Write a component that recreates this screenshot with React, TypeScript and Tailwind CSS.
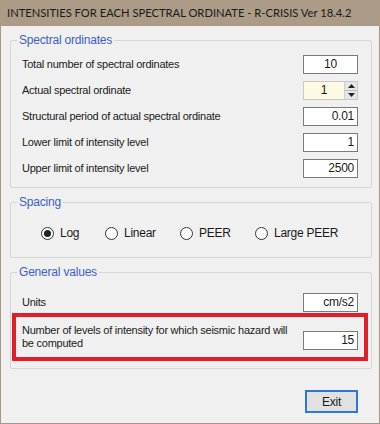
import type { ReactNode } from "react";

const body = "font-['Liberation_Sans',Arial,sans-serif] text-[11px] tracking-[-0.25px] text-[#1a1a1a]";

function Group({ title, children, className = "" }: { title: string; children: ReactNode; className?: string }) {
	return (
		<fieldset className={`border border-[#d5d5d5] rounded-[2px] ${className}`}>
			<legend className="ml-[6px] px-[2px] font-['Liberation_Sans',Arial,sans-serif] text-[12px] tracking-[-0.2px] leading-[15px] text-[#3d5fc4]">
				{title}
			</legend>
			{children}
		</fieldset>
	);
}

function Box({ value, align = "right" }: { value: string; align?: "right" | "center" }) {
	return (
		<div
			className={`w-[55px] h-[19px] bg-white border border-[#7a7a7a] flex items-center px-[3px] ${
				align === "center" ? "justify-center" : "justify-end"
			} ${body} text-[12px]`}
		>
			{value}
		</div>
	);
}

function Row({ label, children }: { label: string; children: ReactNode }) {
	return (
		<div className="h-[26px] flex items-center justify-between pl-[11px] pr-[13px]">
			<span className={body}>{label}</span>
			{children}
		</div>
	);
}

function Radio({ label, checked = false, width }: { label: string; checked?: boolean; width: string }) {
	return (
		<div className={`flex items-center gap-[6px] ${width}`}>
			<span className="w-[13px] h-[13px] rounded-full border border-[#333] bg-white flex items-center justify-center">
				{checked && <span className="w-[7px] h-[7px] rounded-full bg-[#222]" />}
			</span>
			<span className={`${body} text-[12px]`}>{label}</span>
		</div>
	);
}

export default function App() {
	return (
		<div className="w-[380px] h-[424px] bg-[#f0f0f0] border-x border-b border-[#a89682] flex flex-col">
			<div className="h-[26px] -mx-px bg-[#ab9b87] flex items-center px-[7px] whitespace-nowrap overflow-hidden font-['Lato',sans-serif] text-[11.2px] text-[#1a1a1a]">
				INTENSITIES FOR EACH SPECTRAL ORDINATE - R-CRISIS Ver 18.4.2
			</div>

			<div className="flex flex-col pl-[9px] pr-[7px] pt-[7px]">
				<Group title="Spectral ordinates" className="pt-[3px] pb-[6px]">
					<Row label="Total number of spectral ordinates">
						<Box value="10" align="center" />
					</Row>
					<Row label="Actual spectral ordinate">
						<div className="w-[55px] h-[19px] bg-[#fdfae3] border border-[#c8c8c8] flex items-stretch">
							<div className={`flex-1 flex items-center justify-center ${body} text-[12px]`}>1</div>
							<div className="w-[13px] flex flex-col border-l border-[#d0d0d0]">
								<div className="flex-1 bg-[#e6e6e6] border-b border-[#bdbdbd] flex items-center justify-center">
									<svg width="7" height="4" viewBox="0 0 7 4"><path d="M3.5 0 L7 4 L0 4 Z" fill="#222" /></svg>
								</div>
								<div className="flex-1 bg-[#e6e6e6] flex items-center justify-center">
									<svg width="7" height="4" viewBox="0 0 7 4"><path d="M0 0 L7 0 L3.5 4 Z" fill="#222" /></svg>
								</div>
							</div>
						</div>
					</Row>
					<Row label="Structural period of actual spectral ordinate">
						<Box value="0.01" />
					</Row>
					<Row label="Lower limit of intensity level">
						<Box value="1" />
					</Row>
					<Row label="Upper limit of intensity level">
						<Box value="2500" />
					</Row>
				</Group>

				<Group title="Spacing" className="mt-[7px] h-[63px]">
					<div className="flex items-center pl-[30px] pt-[14px]">
						<Radio label="Log" checked width="w-[64px]" />
						<Radio label="Linear" width="w-[75px]" />
						<Radio label="PEER" width="w-[75px]" />
						<Radio label="Large PEER" width="w-[100px]" />
					</div>
				</Group>

				<Group title="General values" className="mt-[7px] pb-[7px]">
					<div className="h-[22px] mt-[11px] flex items-center justify-between pl-[11px] pr-[13px]">
						<span className={body}>Units</span>
						<Box value="cm/s2" />
					</div>
					<div className="ml-px mr-[3px] h-[48px] border-4 border-[#e01f2b] flex items-center justify-between pl-[6px] pr-[6px]">
						<span className={`${body} leading-[13px] w-[268px]`}>
							Number of levels of intensity for which seismic hazard will be computed
						</span>
						<div className="mt-[6px]">
							<Box value="15" />
						</div>
					</div>
				</Group>

				<div className="flex justify-end pr-[14px] mt-[21px]">
					<button className={`w-[53px] h-[23px] bg-[#e1e1e1] border-2 border-[#2b79d2] ${body} text-[12px]`}>
						Exit
					</button>
				</div>
			</div>
		</div>
	);
}
